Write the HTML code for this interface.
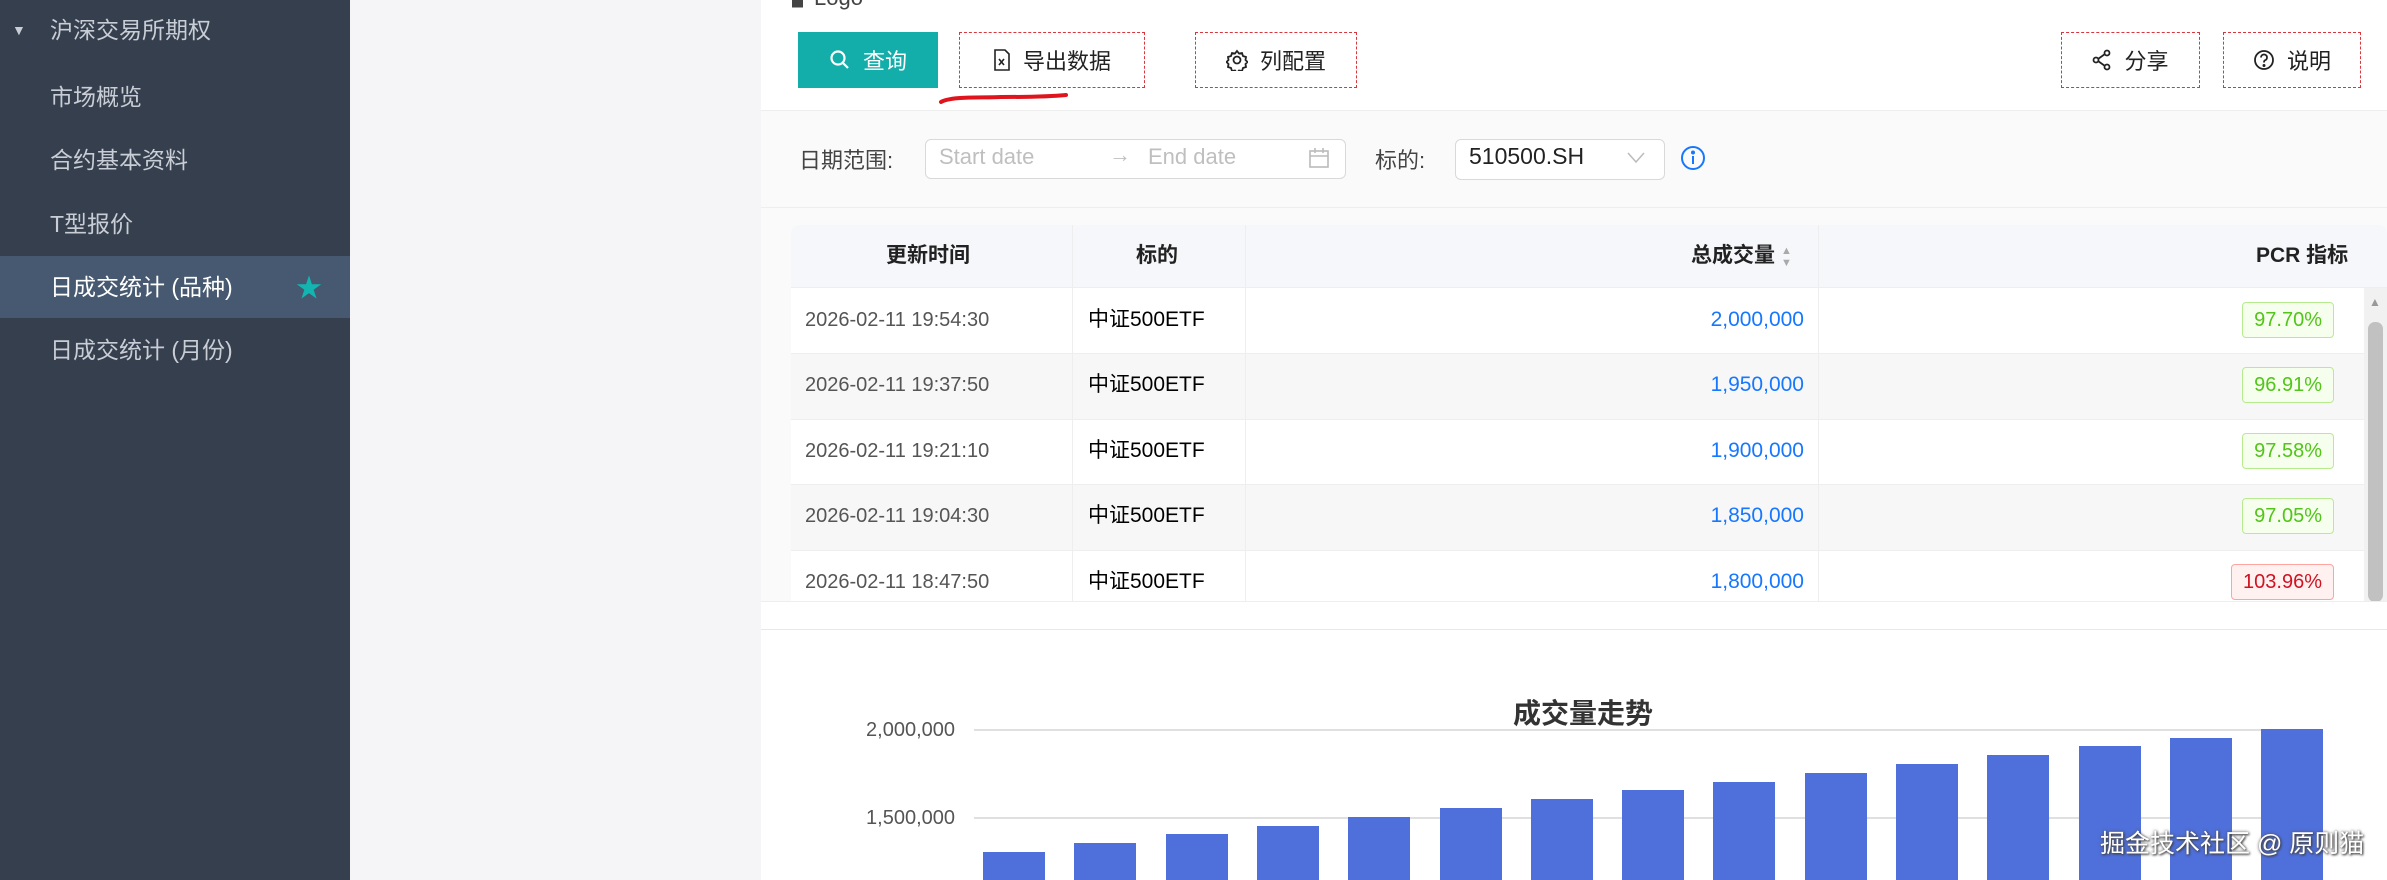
<!DOCTYPE html>
<html><head><meta charset="utf-8"><style>
*{margin:0;padding:0;box-sizing:border-box}
body{width:2387px;height:880px;overflow:hidden;background:#f5f5f7;font-family:"Liberation Sans","Noto Sans CJK SC",sans-serif;position:relative}
.a{position:absolute}
.side{left:0;top:0;width:350px;height:880px;background:#353f4e}
.mi{position:absolute;left:50px;font-size:23px;color:#c9ced6;line-height:30px}
.main{left:761px;top:0;width:1626px;height:880px;background:#fff}
.btn{position:absolute;top:32px;height:56px;border:1.5px dashed #d9363e;font-size:22px;color:#222;display:flex;align-items:center;justify-content:center;gap:12px}
.td{position:absolute;font-size:21px;line-height:30px}
.tag{position:absolute;right:30px;height:36px;padding:0 11px;border:1px solid #b7eb8f;background:#f6ffed;color:#52c41a;border-radius:4px;font-size:20px;line-height:34px}
.bar{position:absolute;width:62px;background:#4f6fdb;bottom:0}
</style></head><body>
<div class="a side">
 <div class="a" style="left:12px;top:22px;font-size:14px;color:#c9ced6">▼</div>
 <div class="mi" style="top:15px">沪深交易所期权</div>
 <div class="mi" style="top:82px">市场概览</div>
 <div class="mi" style="top:145px">合约基本资料</div>
 <div class="mi" style="top:209px">T型报价</div>
 <div class="a" style="left:0;top:256px;width:350px;height:62px;background:#465970"></div>
 <div class="mi" style="top:272px;color:#fff">日成交统计 (品种)</div>
 <div class="a" style="left:296px;top:268px;font-size:26px;color:#13b5b1">★</div>
 <div class="mi" style="top:335px">日成交统计 (月份)</div>
</div>
<div class="a main">
 <div class="a" style="left:31px;top:-20px;font-size:22px;color:#444">▞Logo</div>
 <div class="btn" style="left:37px;width:140px;background:#13aeaa;border:none;color:#fff"><svg width="22" height="22" viewBox="0 0 22 22" fill="none" stroke="#fff" stroke-width="2.2"><circle cx="9" cy="9" r="6.5"/><path d="M14 14l5 5"/></svg>查询</div>
 <div class="btn" style="left:198px;width:186px"><svg width="18" height="22" viewBox="0 0 18 22" fill="none" stroke="#222" stroke-width="1.6"><path d="M2 1h10l4 4v16H2z"/><path d="M6 10l5 6M11 10l-5 6"/></svg>导出数据</div>
 <div class="btn" style="left:434px;width:162px"><svg width="22" height="22" viewBox="0 0 22 22" fill="none" stroke="#222" stroke-width="1.8"><circle cx="11" cy="11" r="3.5"/><path d="M11 2l2 2.5 3-.5 1 3 3 1-.5 3 2 2-2 2 .5 3-3 1-1 3-3-.5-2 2.5-2-2.5-3 .5-1-3-3-1 .5-3-2-2 2-2-.5-3 3-1 1-3 3 .5z"/></svg>列配置</div>
 <div class="btn" style="left:1300px;width:139px"><svg width="20" height="22" viewBox="0 0 20 22" fill="none" stroke="#222" stroke-width="1.8"><circle cx="15" cy="4" r="2.5"/><circle cx="4" cy="11" r="2.5"/><circle cx="15" cy="18" r="2.5"/><path d="M6 10l7-5M6 12l7 5"/></svg>分享</div>
 <div class="btn" style="left:1462px;width:138px"><svg width="22" height="22" viewBox="0 0 22 22" fill="none" stroke="#222" stroke-width="1.8"><circle cx="11" cy="11" r="9"/><path d="M8 8.5a3 3 0 1 1 4 2.8c-1 .4-1 1-1 2.2"/><circle cx="11" cy="16.5" r=".6" fill="#222"/></svg>说明</div>
 <svg class="a" style="left:175px;top:90px" width="140" height="16"><path d="M5 12c10-6 40-4 60-5 20 0 45 0 65-2" stroke="#e0141c" stroke-width="4" fill="none" stroke-linecap="round"/></svg>
 <div class="a" style="left:0;top:110px;width:1626px;height:98px;background:#fafafa;border-top:1px solid #eee;border-bottom:1px solid #eee"></div>
 <div class="a" style="left:38px;top:143px;font-size:22px;color:#444">日期范围:</div>
 <div class="a" style="left:164px;top:139px;width:421px;height:40px;border:1px solid #d9d9d9;border-radius:6px;background:#fff"></div>
 <div class="a" style="left:178px;top:144px;font-size:22px;color:#bfbfbf">Start date</div>
 <div class="a" style="left:348px;top:142px;font-size:22px;color:#bfbfbf">→</div>
 <div class="a" style="left:387px;top:144px;font-size:22px;color:#bfbfbf">End date</div>
 <svg class="a" style="left:547px;top:147px" width="22" height="22" fill="none" stroke="#bbb" stroke-width="1.6"><rect x="2" y="4" width="18" height="16"/><path d="M2 9h18M7 1v5M15 1v5"/></svg>
 <div class="a" style="left:614px;top:143px;font-size:22px;color:#444">标的:</div>
 <div class="a" style="left:694px;top:139px;width:210px;height:41px;border:1px solid #d9d9d9;border-radius:6px;background:#fff"></div>
 <div class="a" style="left:708px;top:143px;font-size:23px;color:#222">510500.SH</div>
 <svg class="a" style="left:866px;top:152px" width="18" height="12" fill="none" stroke="#bbb" stroke-width="1.5"><path d="M1 1l8 9 8-9"/></svg>
 <svg class="a" style="left:919px;top:145px" width="26" height="26" fill="none" stroke="#1677ff" stroke-width="2"><circle cx="13" cy="13" r="11"/><path d="M13 11v8"/><circle cx="13" cy="7.5" r="1" fill="#1677ff"/></svg>
 <div class="a" style="left:0;top:208px;width:1626px;height:422px;background:#fafafa"></div>
 <div class="a" style="left:30px;top:225px;width:1596px;height:376px;background:#fff;border-radius:8px 8px 0 0;overflow:hidden">
  <div class="a" style="left:0;top:0;width:1596px;height:63px;background:#f5f7fa;border-bottom:1px solid #eee"></div>
  <div class="a" style="left:0;top:128px;width:1573px;height:66px;background:#f7f7f7"></div>
  <div class="a" style="left:0;top:259px;width:1573px;height:66px;background:#f7f7f7"></div>
  <div class="a" style="left:0;top:128px;width:1573px;height:1px;background:#eee"></div>
  <div class="a" style="left:0;top:194px;width:1573px;height:1px;background:#eee"></div>
  <div class="a" style="left:0;top:259px;width:1573px;height:1px;background:#eee"></div>
  <div class="a" style="left:0;top:325px;width:1573px;height:1px;background:#eee"></div>
  <div class="a" style="left:281px;top:0;width:1px;height:376px;background:#eee"></div>
  <div class="a" style="left:454px;top:0;width:1px;height:376px;background:#eee"></div>
  <div class="a" style="left:1027px;top:0;width:1px;height:376px;background:#eee"></div>
  <div class="td" style="left:95px;top:16px;font-weight:bold;color:#222">更新时间</div>
  <div class="td" style="left:345px;top:16px;font-weight:bold;color:#222">标的</div>
  <div class="td" style="left:900px;top:16px;font-weight:bold;color:#222">总成交量</div>
  <div class="a" style="left:990px;top:20px;font-size:11px;line-height:12px;color:#aaa">▲<br>▼</div>
  <div class="td" style="left:1465px;top:16px;font-weight:bold;color:#222">PCR 指标</div>
  <div class="a" style="left:1573px;top:63px;width:23px;height:313px;background:#f1f1f1"></div>
  <div class="a" style="left:1577px;top:97px;width:15px;height:280px;background:#c1c1c1;border-radius:7px"></div>
  <div class="a" style="left:1578px;top:70px;font-size:12px;color:#999">▲</div>
 </div>
 <div class="a" style="left:30px;top:288px;width:1573px;height:313px;overflow:hidden">
  <div class="td" style="left:14px;top:17px;color:#555;font-size:20px">2026-02-11 19:54:30</div>
  <div class="td" style="left:14px;top:82px;color:#555;font-size:20px">2026-02-11 19:37:50</div>
  <div class="td" style="left:14px;top:148px;color:#555;font-size:20px">2026-02-11 19:21:10</div>
  <div class="td" style="left:14px;top:213px;color:#555;font-size:20px">2026-02-11 19:04:30</div>
  <div class="td" style="left:14px;top:279px;color:#555;font-size:20px">2026-02-11 18:47:50</div>
  <div class="td" style="left:297px;top:17px">中证500ETF</div>
  <div class="td" style="left:297px;top:82px">中证500ETF</div>
  <div class="td" style="left:297px;top:148px">中证500ETF</div>
  <div class="td" style="left:297px;top:213px">中证500ETF</div>
  <div class="td" style="left:297px;top:279px">中证500ETF</div>
  <div class="td" style="right:560px;top:17px;color:#1677ff">2,000,000</div>
  <div class="td" style="right:560px;top:82px;color:#1677ff">1,950,000</div>
  <div class="td" style="right:560px;top:148px;color:#1677ff">1,900,000</div>
  <div class="td" style="right:560px;top:213px;color:#1677ff">1,850,000</div>
  <div class="td" style="right:560px;top:279px;color:#1677ff">1,800,000</div>
  <div class="tag" style="top:14px">97.70%</div>
  <div class="tag" style="top:79px">96.91%</div>
  <div class="tag" style="top:145px">97.58%</div>
  <div class="tag" style="top:210px">97.05%</div>
  <div class="tag" style="top:276px;border-color:#ffa39e;background:#fff1f0;color:#cf1322">103.96%</div>
 </div>
 <div class="a" style="left:0;top:601px;width:1626px;height:29px;background:#fff;border-top:1px solid #eee;border-bottom:1px solid #e8e8e8"></div>
 <div class="a" style="left:0;top:630px;width:1626px;height:250px;background:#fff"></div>
 <div class="a" style="left:752px;top:692px;font-size:28px;font-weight:bold;color:#333">成交量走势</div>
 <div class="a" style="right:1432px;top:719px;font-size:20px;color:#555">2,000,000</div>
 <div class="a" style="right:1432px;top:807px;font-size:20px;color:#555">1,500,000</div>
 <div class="a" style="left:213px;top:729px;width:1348px;height:2px;background:#e0e0e0"></div>
 <div class="a" style="left:213px;top:817px;width:1348px;height:2px;background:#e0e0e0"></div>
 <div class="a" style="left:0;top:0;width:1626px;height:880px">
  <div class="bar" style="left:222px;top:852px"></div>
  <div class="bar" style="left:313px;top:843px"></div>
  <div class="bar" style="left:405px;top:834px"></div>
  <div class="bar" style="left:496px;top:826px"></div>
  <div class="bar" style="left:587px;top:817px"></div>
  <div class="bar" style="left:679px;top:808px"></div>
  <div class="bar" style="left:770px;top:799px"></div>
  <div class="bar" style="left:861px;top:790px"></div>
  <div class="bar" style="left:952px;top:782px"></div>
  <div class="bar" style="left:1044px;top:773px"></div>
  <div class="bar" style="left:1135px;top:764px"></div>
  <div class="bar" style="left:1226px;top:755px"></div>
  <div class="bar" style="left:1318px;top:746px"></div>
  <div class="bar" style="left:1409px;top:738px"></div>
  <div class="bar" style="left:1500px;top:729px"></div>
 </div>
 <div class="a" style="left:1339px;top:824px;font-size:25px;color:#fff;text-shadow:0 0 3px #555,1px 1px 2px #333">掘金技术社区 @ 原则猫</div>
</div>
</body></html>
